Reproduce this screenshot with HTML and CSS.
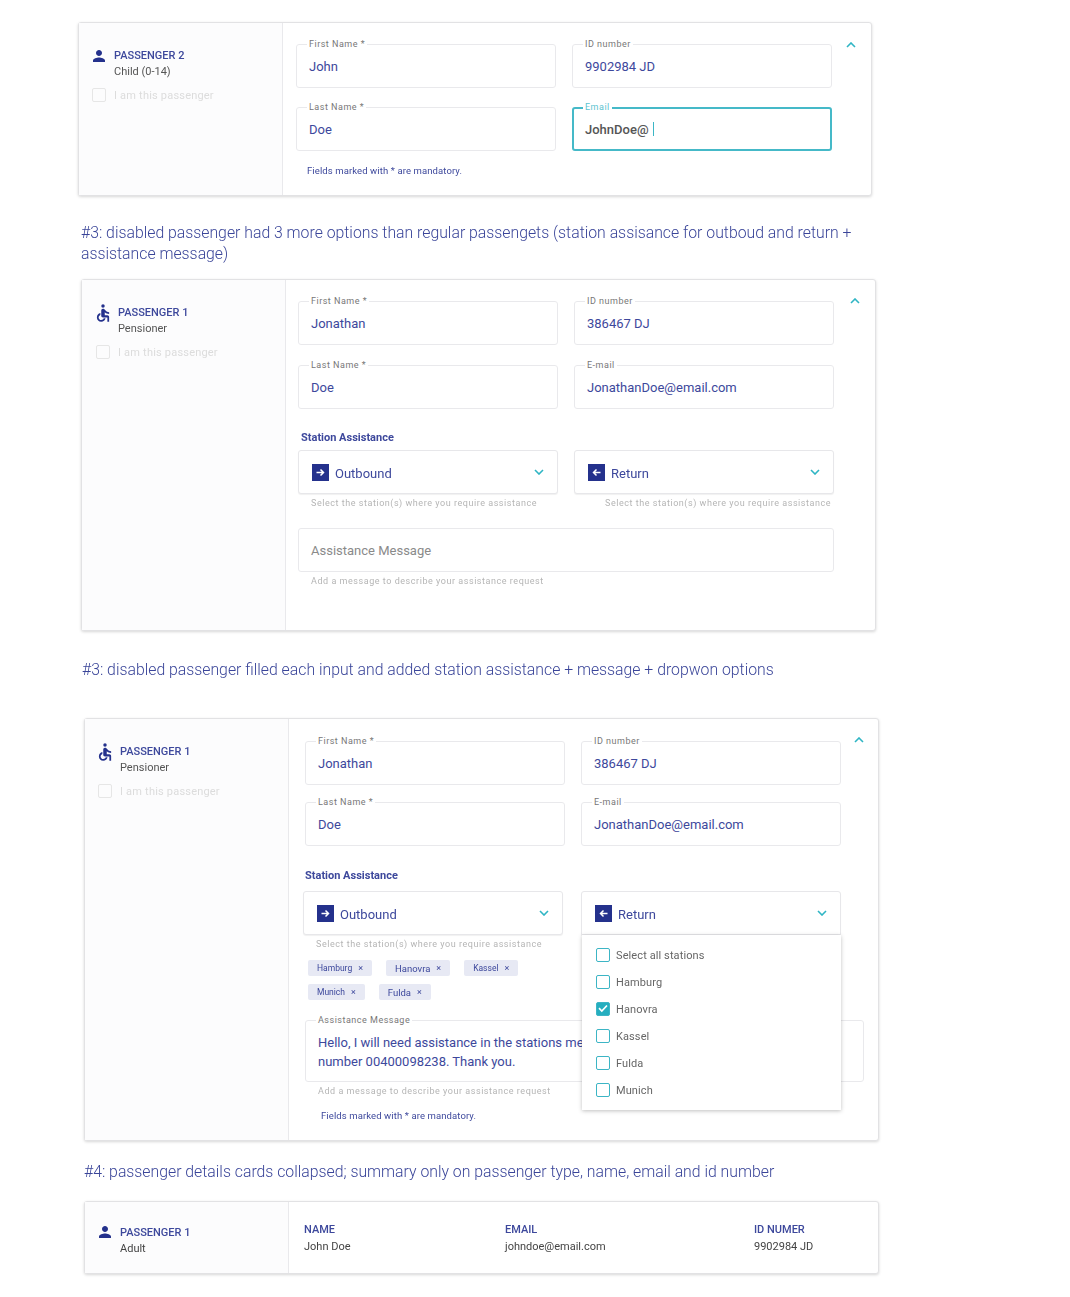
FILE: index.html
```html
<!DOCTYPE html>
<html lang="en">
<head>
<meta charset="utf-8">
<title>Passenger details</title>
<link rel="stylesheet" href="styles.css">
</head>
<body>
<svg class="sprites" width="0" height="0" aria-hidden="true">
  <symbol id="person" viewBox="4 4 16 16"><path d="M12 12c2.21 0 4-1.79 4-4s-1.79-4-4-4-4 1.79-4 4 1.79 4 4 4zm0 2c-2.67 0-8 1.34-8 4v2h16v-2c0-2.66-5.33-4-8-4z"/></symbol>
  <symbol id="access" viewBox="4 2 16 20"><circle cx="12" cy="4" r="2"/><path d="M19 13v-2c-1.54.02-3.09-.75-4.07-1.83l-1.29-1.43c-.17-.19-.38-.34-.61-.45-.01 0-.01-.01-.02-.01H13c-.35-.2-.75-.3-1.19-.26C10.76 7.11 10 8.04 10 9.09V15c0 1.1.9 2 2 2h5v5h2v-5.5c0-1.1-.9-2-2-2h-3v-3.45c1.29 1.07 3.25 1.94 5 1.95zm-6.17 5c-.41 1.16-1.52 2-2.83 2-1.66 0-3-1.34-3-3 0-1.31.84-2.41 2-2.83V12.1c-2.28.46-4 2.48-4 4.9 0 2.76 2.24 5 5 5 2.42 0 4.44-1.72 4.9-4h-2.07z"/></symbol>
  <symbol id="up" viewBox="0 0 10 6"><path d="M1 5l4-4 4 4" fill="none" stroke="currentColor" stroke-width="1.6"/></symbol>
  <symbol id="down" viewBox="0 0 10 6"><path d="M1 1l4 4 4-4" fill="none" stroke="currentColor" stroke-width="1.6"/></symbol>
  <symbol id="right" viewBox="0 0 17 17"><rect width="17" height="17"/><path d="M4.5 8.5h7M8.5 5.5l3 3-3 3" fill="none" stroke="#fff" stroke-width="1.5"/></symbol>
  <symbol id="left" viewBox="0 0 17 17"><rect width="17" height="17"/><path d="M12.5 8.500h-7M8.500 5.500l-3 3 3 3" fill="none" stroke="#fff" stroke-width="1.5"/></symbol>
</svg>

<main class="page">

  <section class="card card-a">
    <aside class="side">
      <div class="who">
        <svg class="who-icon"><use href="#person"/></svg>
        <div><div class="who-title">PASSENGER 2</div><div class="who-type">Child (0-14)</div></div>
      </div>
      <div class="self"><span class="box"></span><span>I am this passenger</span></div>
    </aside>
    <div class="main">
      <div class="form">
        <div class="grid">
          <div class="field"><span class="legend">First Name *</span><span class="value">John</span></div>
          <div class="field"><span class="legend">ID number</span><span class="value">9902984 JD</span></div>
          <div class="field"><span class="legend">Last Name *</span><span class="value">Doe</span></div>
          <div class="field field-focus"><span class="legend">Email</span><span class="value value-typed">JohnDoe@</span><span class="caret"></span></div>
        </div>
        <p class="note">Fields marked with * are mandatory.</p>
      </div>
      <svg class="collapse"><use href="#up"/></svg>
    </div>
  </section>

  <h2 class="caption caption-a">#3: disabled passenger had 3 more options than regular passengets (station assisance for outboud and return + assistance message)</h2>

  <section class="card card-b">
    <aside class="side">
      <div class="who">
        <svg class="who-icon who-icon-access"><use href="#access"/></svg>
        <div><div class="who-title">PASSENGER 1</div><div class="who-type">Pensioner</div></div>
      </div>
      <div class="self"><span class="box"></span><span>I am this passenger</span></div>
    </aside>
    <div class="main">
      <div class="form">
        <div class="grid">
          <div class="field"><span class="legend">First Name *</span><span class="value">Jonathan</span></div>
          <div class="field"><span class="legend">ID number</span><span class="value">386467 DJ</span></div>
          <div class="field"><span class="legend">Last Name *</span><span class="value">Doe</span></div>
          <div class="field"><span class="legend">E-mail</span><span class="value">JonathanDoe@email.com</span></div>
        </div>
        <h3 class="group">Station Assistance</h3>
        <div class="grid">
          <div>
            <div class="select"><svg class="dir"><use href="#right"/></svg><span class="select-label">Outbound</span><svg class="caret-down"><use href="#down"/></svg></div>
            <p class="hint">Select the station(s) where you require assistance</p>
          </div>
          <div>
            <div class="select"><svg class="dir"><use href="#left"/></svg><span class="select-label">Return</span><svg class="caret-down"><use href="#down"/></svg></div>
            <p class="hint hint-end">Select the station(s) where you require assistance</p>
          </div>
        </div>
        <div class="field field-wide"><span class="placeholder">Assistance Message</span></div>
        <p class="hint">Add a message to describe your assistance request</p>
      </div>
      <svg class="collapse"><use href="#up"/></svg>
    </div>
  </section>

  <h2 class="caption caption-b">#3: disabled passenger filled each input and added station assistance + message + dropwon options</h2>

  <section class="card card-c">
    <aside class="side">
      <div class="who">
        <svg class="who-icon who-icon-access"><use href="#access"/></svg>
        <div><div class="who-title">PASSENGER 1</div><div class="who-type">Pensioner</div></div>
      </div>
      <div class="self"><span class="box"></span><span>I am this passenger</span></div>
    </aside>
    <div class="main">
      <div class="form">
        <div class="grid">
          <div class="field"><span class="legend">First Name *</span><span class="value">Jonathan</span></div>
          <div class="field"><span class="legend">ID number</span><span class="value">386467 DJ</span></div>
          <div class="field"><span class="legend">Last Name *</span><span class="value">Doe</span></div>
          <div class="field"><span class="legend">E-mail</span><span class="value">JonathanDoe@email.com</span></div>
        </div>
        <h3 class="group">Station Assistance</h3>
        <div class="grid">
          <div class="cell-shift">
            <div class="select"><svg class="dir"><use href="#right"/></svg><span class="select-label">Outbound</span><svg class="caret-down"><use href="#down"/></svg></div>
            <p class="hint">Select the station(s) where you require assistance</p>
            <div class="chips">
              <span class="chip">Hamburg<i>×</i></span>
              <span class="chip chip-lg">Hanovra<i>×</i></span>
              <span class="chip">Kassel<i>×</i></span>
              <span class="chip">Munich<i>×</i></span>
              <span class="chip chip-lg">Fulda<i>×</i></span>
            </div>
          </div>
          <div class="open-select">
            <div class="select select-open"><svg class="dir"><use href="#left"/></svg><span class="select-label">Return</span><svg class="caret-down"><use href="#down"/></svg></div>
            <ul class="menu">
              <li><span class="tick"></span>Select all stations</li>
              <li><span class="tick"></span>Hamburg</li>
              <li><span class="tick tick-on"><svg viewBox="0 0 14 14"><path d="M3 7.200l2.800 2.800L11 4.500" fill="none" stroke="#fff" stroke-width="1.700"/></svg></span>Hanovra</li>
              <li><span class="tick"></span>Kassel</li>
              <li><span class="tick"></span>Fulda</li>
              <li><span class="tick"></span>Munich</li>
            </ul>
          </div>
        </div>
        <div class="field field-message"><span class="legend">Assistance Message</span><p class="message">Hello, I will need assistance in the stations mentioned for train<br>number 00400098238. Thank you.</p></div>
        <p class="hint">Add a message to describe your assistance request</p>
        <p class="note">Fields marked with * are mandatory.</p>
      </div>
      <svg class="collapse"><use href="#up"/></svg>
    </div>
  </section>

  <h2 class="caption caption-c">#4: passenger details cards collapsed; summary only on passenger type, name, email and id number</h2>

  <section class="card card-d">
    <aside class="side">
      <div class="who">
        <svg class="who-icon"><use href="#person"/></svg>
        <div><div class="who-title">PASSENGER 1</div><div class="who-type who-type-dark">Adult</div></div>
      </div>
    </aside>
    <div class="summary">
      <div><div class="sum-title">NAME</div><div class="sum-value">John Doe</div></div>
      <div><div class="sum-title">EMAIL</div><div class="sum-value">johndoe@email.com</div></div>
      <div><div class="sum-title">ID NUMER</div><div class="sum-value">9902984 JD</div></div>
    </div>
  </section>

</main>
</body>
</html>
```

FILE: styles.css
```css
* { box-sizing: border-box; }
html, body { margin: 0; background: #fff; }
body { font-family: Roboto, "Liberation Sans", sans-serif; color: #3d489c; }
.sprites { position: absolute; }
.page { padding-top: 22px; height: 1297px; overflow: hidden; filter: blur(0.55px); }

.card {
  display: flex;
  width: 795px;
  background: #fff;
  border: 1px solid #e2e2e4;
  border-radius: 3px;
  box-shadow: 0 1px 3px rgba(0, 0, 0, .16);
}
.card-a { width: 794px; margin-left: 78px; height: 174px; --pad: 13px; --gap: 16px; --chev: 13px; --chev-top: 1px; --form-top: 3px; --row: 19px; }
.card-b { margin-left: 81px; height: 352px; --pad: 12px; --gap: 16px; --chev: 15px; --chev-top: 0px; --form-top: 3px; --row: 20px; }
.card-c { margin-left: 84px; height: 423px; --pad: 16px; --gap: 16px; --chev: 12px; --chev-top: 0px; --form-top: 4px; --row: 17px; }
.card-d { margin-left: 84px; height: 73px; }

.caption { margin: 0; font-size: 15.800px; font-weight: 300; line-height: 21px; color: #3a4599; }
.caption-a { margin: 26px 0 15px 81px; width: 790px; }
.caption-b { margin: 28px 0 38px 82px; }
.caption-c { margin: 20px 0 19px 84px; }

.side {
  flex: 0 0 204px;
  padding: 25px 0 0 13px;
  background: #fcfcfd;
  border-right: 1px solid #e9e9ec;
}
.card-b .side { padding-left: 14px; }
.card-d .side { padding-top: 23px; }
.who { display: flex; gap: 8px; }
.who-icon { flex: none; width: 14px; height: 12px; margin-top: 2px; fill: #24318c; }
.who-icon-access { height: 18px; margin-top: -1px; }
.card-d .who-icon { margin-top: 1px; }
.who-title { font-size: 11px; font-weight: 500; line-height: 16px; color: #3d489c; }
.who-type { font-size: 11px; line-height: 16px; color: #555; }
.who-type-dark { color: #444; }
.self { display: flex; align-items: center; gap: 8px; margin-top: 8px; font-size: 11px; letter-spacing: .2px; color: #dcdcdc; }
.box { width: 14px; height: 14px; border: 1.5px solid #e6e6e6; border-radius: 2px; }

.main { flex: 1; display: flex; padding: 18px 0 0 var(--pad); }
.form { width: 537px; padding-top: var(--form-top); }
.collapse { flex: none; width: 10px; height: 6px; margin: var(--chev-top) 0 0 var(--chev); color: #2fb5c4; }
.grid { display: grid; grid-template-columns: 260px 260px; column-gap: var(--gap); row-gap: var(--row); }

.field {
  position: relative;
  display: flex;
  align-items: center;
  height: 44px;
  padding-left: 12px;
  border: 1px solid #e9e9ec;
  border-radius: 3px;
  background: #fff;
}
.legend {
  position: absolute;
  top: -6px;
  left: 10px;
  padding: 0 2px;
  background: #fff;
  font-size: 9px;
  line-height: 11px;
  letter-spacing: .5px;
  color: #777;
}
.value { font-size: 13px; color: #3d489c; }
.value-typed { color: #555; font-weight: 500; }
.caret { width: 1px; height: 14px; margin-left: 4px; background: #3bb6c6; }
.field-focus { border: 2px solid #45b9c8; padding-left: 11px; }
.field-focus .legend { top: -7px; left: 9px; color: #5cc3d0; }

.note { margin: 14px 0 0 11px; font-size: 9.500px; line-height: 12px; letter-spacing: .1px; color: #3d489c; }
.group { margin: 23px 0 6px 3px; font-size: 11px; font-weight: 700; line-height: 12px; color: #3d489c; }
.card-c .group { margin: 24px 0 9px 0; }

.select {
  display: flex;
  align-items: center;
  height: 44px;
  padding: 0 13px;
  border: 1px solid #e7e7ea;
  border-radius: 3px;
  background: #fff;
  box-shadow: 0 1px 1px rgba(0, 0, 0, .06);
}
.dir { flex: none; width: 17px; height: 17px; margin-right: 6px; fill: #24318c; }
.select-label { flex: 1; padding-top: 2px; font-size: 13px; color: #3d489c; }
.caret-down { flex: none; width: 10px; height: 6px; color: #2fb5c4; }
.hint { margin: 4px 0 0 13px; font-size: 9px; line-height: 11px; letter-spacing: .54px; color: #b5b5b5; }
.hint-end { margin-right: 3px; text-align: right; }
.field-wide { width: 536px; margin-top: 19px; }
.placeholder { font-size: 13px; color: #8a8a8a; }

.cell-shift { width: 260px; margin-left: -2px; }
.open-select { position: relative; }
.select-open { border-radius: 3px 3px 0 0; }
.menu {
  position: absolute;
  top: 44px;
  left: 1px;
  right: 0;
  z-index: 2;
  height: 175px;
  margin: 0;
  padding: 7px 0 0 14px;
  list-style: none;
  background: #fff;
  box-shadow: 0 1px 4px rgba(0, 0, 0, .25);
}
.menu li { display: flex; align-items: center; gap: 6px; height: 27px; font-size: 11px; letter-spacing: .1px; color: #666; }
.tick { width: 14px; height: 14px; margin-top: -2px; border: 1.5px solid #3cb5c5; border-radius: 2px; background: #fff; }
.tick-on { background: #25aebf; }
.tick-on svg { display: block; width: 14px; height: 14px; margin: -1.500px; }

.chips { display: flex; flex-wrap: wrap; gap: 8px 14px; margin: 10px 0 0 5px; }
.chip {
  display: inline-flex;
  align-items: center;
  gap: 6px;
  height: 16px;
  padding: 0 9px;
  border-radius: 2px;
  background: #e7e9f4;
  font-size: 8.500px;
  color: #3d489c;
}
.chip i { font-style: normal; font-size: 9px; }
.chip-lg { font-size: 9.500px; }

.field-message {
  display: block;
  width: 559px;
  height: 62px;
  margin-top: 20px;
  padding-top: 12px;
}
.message { margin: 0; font-size: 13px; line-height: 19px; white-space: nowrap; color: #3d489c; }
.card-c .note { margin: 13px 0 0 16px; }

.summary {
  flex: 1;
  display: grid;
  grid-template-columns: 201px 249px 1fr;
  padding: 19px 0 0 15px;
  font-size: 11px;
  line-height: 17px;
}
.sum-title { font-weight: 500; color: #3d489c; }
.sum-value { color: #444; }
```
